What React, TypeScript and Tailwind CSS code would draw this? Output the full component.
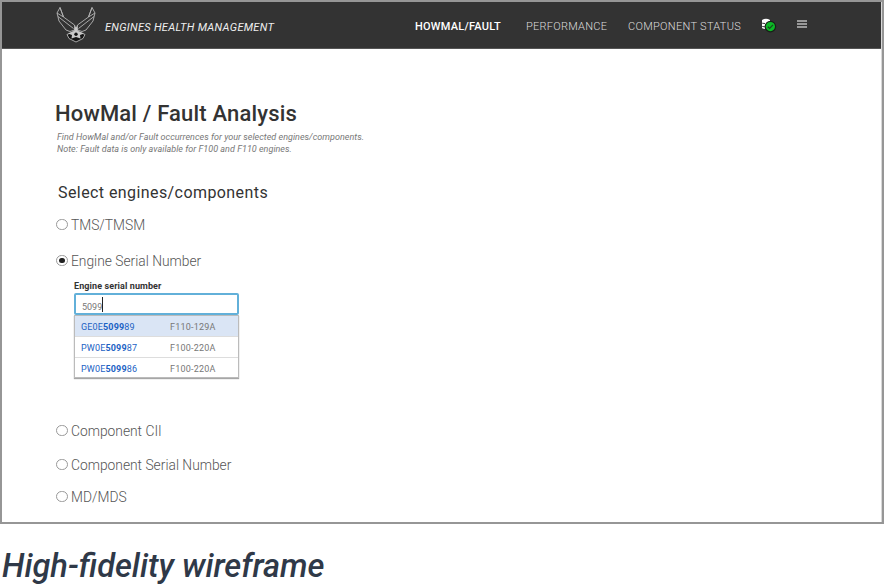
import type { ReactNode } from "react";

function WingsLogo() {
  return (
    <svg width="40" height="37" viewBox="0 0 40 37" fill="none" stroke="#b4b4b4" strokeWidth=".9" strokeLinejoin="round">
      <path d="M4 1.5 L1 7 L3 15 L10 24 L14 25.5 L18.5 24 L18.5 19 L7.5 11 Z" />
      <path d="M36 1.5 L39 7 L37 15 L30 24 L26 25.5 L21.5 24 L21.5 19 L32.5 11 Z" />
      <path d="M4 1.5 L7.5 11 M36 1.5 L32.5 11 M1 7 L7.5 11 M2 10.5 L17.5 22.5 M39 7 L32.5 11 M38 10.5 L22.5 22.5" />
      <path fill="#151515" d="M11 28.5 L17 26 L20 21 L23 26 L29 28.5 L27 32.5 L20 36 L13 32.5 Z" />
      <path fill="#c8c8c8" stroke="none" d="M20 19 L22 25 L28 27.5 L24 29 L24.5 32.5 L20 31 L15.5 32.5 L16 29 L12 27.5 L18 25 Z" />
      <circle cx="20" cy="28.3" r="1.7" fill="#151515" stroke="none" />
    </svg>
  );
}

function DatabaseStatus() {
  return (
    <svg width="16" height="15" viewBox="0 0 16 15">
      <path fill="#fff" d="M1 2 Q5 -.6 9 2 V11 H5 Q2 11 1 10 Z" />
      <path stroke="#333" strokeWidth="1" fill="none" d="M0 4.5 Q1 5.5 4 5.5 M0 7.8 Q1 8.8 4 8.8" />
      <circle cx="9.4" cy="8.6" r="5.2" fill="#0cb826" stroke="#182018" strokeWidth="1.2" />
      <path d="M6.8 8.8 L8.6 10.5 L12 6.9" stroke="#174a1d" strokeWidth="1.2" fill="none" />
    </svg>
  );
}

function Radio({ checked, className, children }: { checked?: boolean; className: string; children: ReactNode }) {
  return (
    <div className={`flex h-5 items-center gap-[3.5px] text-[13.8px] leading-5 font-light text-[#555] ${className}`}>
      <span className="-mt-px flex size-[11.5px] items-center justify-center rounded-full border border-[#999] bg-white">
        {checked && <span className="size-[5.5px] rounded-full bg-[#222]" />}
      </span>
      <span className="whitespace-nowrap">{children}</span>
    </div>
  );
}

const options = [
  { prefix: "GE0E", suffix: "89", model: "F110-129A", row: "h-[20px] bg-[#dae5f5]" },
  { prefix: "PW0E", suffix: "87", model: "F100-220A", row: "h-[21px] border-t border-[#ddd]" },
  { prefix: "PW0E", suffix: "86", model: "F100-220A", row: "h-[20px] border-t border-[#ddd]" },
];

export default function App() {
  return (
    <div className="h-[584px] w-[884px] overflow-hidden bg-white font-['Roboto',sans-serif]">
      <div className="h-[524px] border-2 border-[#969696]">
        <div className="h-full border-r border-[#d8d8d8]">
          <header className="flex h-[47px] border-b border-[#555] bg-[#333] whitespace-nowrap">
            <div className="ml-[54px] w-[49px] pt-[4px]"><WingsLogo /></div>
            <div className="w-[310px] pt-[18px] text-[11px] leading-4 tracking-[0.3px] text-[#eee] italic">ENGINES HEALTH MANAGEMENT</div>
            <nav className="flex pt-[17px] text-[11px] leading-4 font-light text-[#ddd]">
              <span className="w-[111px] font-medium tracking-[0.24px] text-white">HOWMAL/FAULT</span>
              <span className="w-[102px] tracking-[0.26px]">PERFORMANCE</span>
              <span className="w-[133px] tracking-[0.3px]">COMPONENT STATUS</span>
            </nav>
            <div className="w-[36px] pt-[16px]"><DatabaseStatus /></div>
            <div className="flex flex-col gap-[1.5px] pt-[18px]">
              <span className="h-[1.5px] w-[10px] bg-[#999]" />
              <span className="h-[1.5px] w-[10px] bg-[#999]" />
              <span className="h-[1.5px] w-[10px] bg-[#999]" />
            </div>
          </header>
          <main className="pl-[53px]">
            <h1 className="mt-[51px] text-[22px] leading-[28px] font-medium tracking-[0.17px] text-[#333]">HowMal / Fault Analysis</h1>
            <p className="mt-[3px] ml-[2px] text-[9px] leading-[12px] tracking-[0.02px] text-[#777] italic">
              Find HowMal and/or Fault occurrences for your selected engines/components.<br />
              Note: Fault data is only available for F100 and F110 engines.
            </p>
            <h2 className="mt-[26px] ml-[3px] text-[16px] leading-6 tracking-[0.42px] text-[#333]">Select engines/components</h2>
            <Radio className="mt-[10px] ml-px">TMS/TMSM</Radio>
            <Radio checked className="mt-[16px] ml-px">Engine Serial Number</Radio>
            <div className="mt-[9px] ml-[19px] h-[99px] w-[165px]">
              <div className="h-[13px] text-[9px] leading-[12px] font-bold tracking-[0.1px] text-[#333]">Engine serial number</div>
              <div className="flex h-[22px] items-center rounded-[2px] border-2 border-[#62b0d9] pl-[6px] text-[9px] text-[#777]">
                <span className="pt-[7px]">5099</span><span className="h-[15px] w-px bg-[#222]" />
              </div>
              <div className="border border-[#bbb] text-[9px] shadow-[0_1px_1px_rgba(0,0,0,0.35)]">
                {options.map((o) => (
                  <div key={o.prefix + o.suffix} className={`flex items-center pt-[4px] pl-[6px] ${o.row}`}>
                    <span className="w-[89px] tracking-[0.15px] text-[#1b62c4]">{o.prefix}<b>5099</b>{o.suffix}</span>
                    <span className="tracking-[0.2px] text-[#777]">{o.model}</span>
                  </div>
                ))}
              </div>
            </div>
            <Radio className="mt-[42px] ml-px">Component CII</Radio>
            <Radio className="mt-[14px] ml-px">Component Serial Number</Radio>
            <Radio className="mt-[12px] ml-px">MD/MDS</Radio>
          </main>
        </div>
      </div>
      <p className="mt-[23px] ml-[2px] text-[32.6px] leading-[38px] font-medium text-[#2f3948] italic">High-fidelity wireframe</p>
    </div>
  );
}
